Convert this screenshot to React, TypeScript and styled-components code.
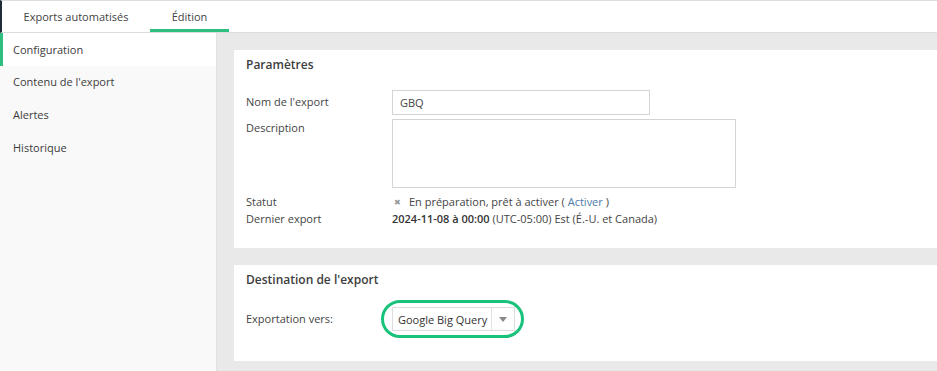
import React from "react";
import styled, { createGlobalStyle } from "styled-components";

const GlobalStyle = createGlobalStyle`
  html, body {
    margin: 0;
    padding: 0;
    background: #e9e9e9;
  }
  body {
    font-family: "Open Sans", "Liberation Sans", Arial, sans-serif;
    font-size: 11px;
    color: #444;
  }
  * {
    box-sizing: border-box;
  }
`;

const sideItems = ["Configuration", "Contenu de l'export", "Alertes", "Historique"];

export default function App() {
  return (
    <Page>
      <GlobalStyle />
      <TabBar>
        <Tab $width={148}>Exports automatisés</Tab>
        <Tab $width={79} $active>
          Édition
        </Tab>
      </TabBar>

      <Body>
        <Sidebar>
          {sideItems.map((item, i) => (
            <SideItem key={item} $active={i === 0}>
              {item}
            </SideItem>
          ))}
        </Sidebar>

        <Main>
          <Card $bottom={21}>
            <CardTitle>Paramètres</CardTitle>
            <FormGrid>
              <Label $top={4}>Nom de l'export</Label>
              <TextInput defaultValue="GBQ" />
              <Label $top={1}>Description</Label>
              <TextArea />
            </FormGrid>
            <InfoGrid>
              <InfoLabel>Statut</InfoLabel>
              <InfoValue>
                <Cross>✖</Cross>
                En préparation, prêt à activer ( <Link>Activer</Link> )
              </InfoValue>
              <InfoLabel>Dernier export</InfoLabel>
              <InfoValue $flush>
                <b>2024-11-08 à 00:00</b> (UTC-05:00) Est (É.-U. et Canada)
              </InfoValue>
            </InfoGrid>
          </Card>

          <Card $bottom={30}>
            <CardTitle>Destination de l'export</CardTitle>
            <DestRow>
              <Label>Exportation vers:</Label>
              <Highlight>
                <Select>
                  <SelectText>Google Big Query</SelectText>
                  <SelectCaret>
                    <svg width="8" height="5" viewBox="0 0 8 5">
                      <path d="M0 0 L8 0 L4 5 Z" fill="#888" />
                    </svg>
                  </SelectCaret>
                </Select>
                <Ring />
              </Highlight>
            </DestRow>
          </Card>
        </Main>
      </Body>
    </Page>
  );
}

const Page = styled.div`
  width: 937px;
  height: 371px;
  display: flex;
  flex-direction: column;
  overflow: hidden;
`;

const TabBar = styled.div`
  height: 33px;
  display: flex;
  background: #fff;
  border-top: 1px solid #dedede;
  border-bottom: 1px solid #dcdcdc;
  border-left: 2px solid #1f2d3b;
`;

const Tab = styled.div<{ $active?: boolean; $width: number }>`
  height: 100%;
  width: ${(p) => p.$width}px;
  display: flex;
  align-items: center;
  justify-content: center;
  white-space: nowrap;
  font-size: 11px;
  color: #444;
  border-bottom: 3px solid ${(p) => (p.$active ? "#2fbf80" : "transparent")};
  padding-top: 2px;
`;

const Body = styled.div`
  flex: 1;
  display: flex;
  min-height: 0;
`;

const Sidebar = styled.div`
  width: 217px;
  flex-shrink: 0;
  background: #f9f9f9;
  border-right: 1px solid #e2e2e2;
`;

const SideItem = styled.div<{ $active?: boolean }>`
  height: ${(p) => (p.$active ? "33px" : "32.7px")};
  display: flex;
  align-items: center;
  padding-bottom: ${(p) => (p.$active ? "0" : "1px")};
  padding-left: ${(p) => (p.$active ? "10px" : "13px")};
  border-left: ${(p) => (p.$active ? "3px solid #2fbf80" : "0")};
  background: ${(p) => (p.$active ? "#fff" : "transparent")};
  font-size: 11px;
  color: #3c3c3c;
`;

const Main = styled.div`
  flex: 1;
  background: #e9e9e9;
  padding: 17px 0 0 17px;
  display: flex;
  flex-direction: column;
  gap: 17px;
`;

const Card = styled.div<{ $bottom: number }>`
  background: #fff;
  padding: 6px 12px ${(p) => p.$bottom}px 12px;
`;

const CardTitle = styled.div`
  font-size: 12px;
  font-weight: 600;
  line-height: 18px;
  color: #3d3d3d;
`;

const FormGrid = styled.div`
  margin-top: 16px;
  display: grid;
  grid-template-columns: 146px auto;
  justify-content: start;
  row-gap: 4px;
`;

const Label = styled.div<{ $top?: number }>`
  font-size: 11px;
  line-height: 16px;
  color: #444;
  padding-top: ${(p) => p.$top ?? 0}px;
`;

const TextInput = styled.input`
  width: 258px;
  height: 25px;
  border: 1px solid #d4d4d4;
  padding: 0 7px;
  font-family: inherit;
  font-size: 11px;
  color: #444;
  outline: none;
`;

const TextArea = styled.textarea`
  width: 344px;
  height: 69px;
  border: 1px solid #d4d4d4;
  resize: none;
  outline: none;
  display: block;
`;

const InfoGrid = styled.div`
  margin-top: 5px;
  display: grid;
  grid-template-columns: 146px auto;
  justify-content: start;
`;

const InfoLabel = styled.div`
  line-height: 17px;
  color: #444;
`;

const InfoValue = styled.div<{ $flush?: boolean }>`
  line-height: 17px;
  color: #444;
  padding-left: ${(p) => (p.$flush ? "0" : "2px")};
  display: flex;
  align-items: center;
  white-space: pre;

  b {
    font-weight: 600;
    color: #333;
  }
`;

const Cross = styled.span`
  color: #999;
  font-size: 8px;
  margin-right: 8px;
`;

const Link = styled.span`
  color: #4a7ba6;
`;

const DestRow = styled.div`
  margin-top: 18px;
  display: flex;
  align-items: center;

  & > ${Label} {
    width: 146px;
  }
`;

const Highlight = styled.div`
  position: relative;
  display: inline-flex;
`;

const Select = styled.div`
  height: 24px;
  display: flex;
  align-items: stretch;
  border: 1px solid #dcdcdc;
  background: #fff;
`;

const SelectText = styled.div`
  display: flex;
  align-items: center;
  padding: 0 4px 0 5px;
  font-size: 11px;
  color: #333;
  border-right: 1px solid #e2e2e2;
`;

const SelectCaret = styled.div`
  width: 22px;
  display: flex;
  align-items: center;
  justify-content: center;
`;

const Ring = styled.div`
  position: absolute;
  left: -11px;
  right: -9px;
  top: -7px;
  bottom: -7px;
  border: 3px solid #19c27b;
  border-radius: 20px;
  pointer-events: none;
`;
